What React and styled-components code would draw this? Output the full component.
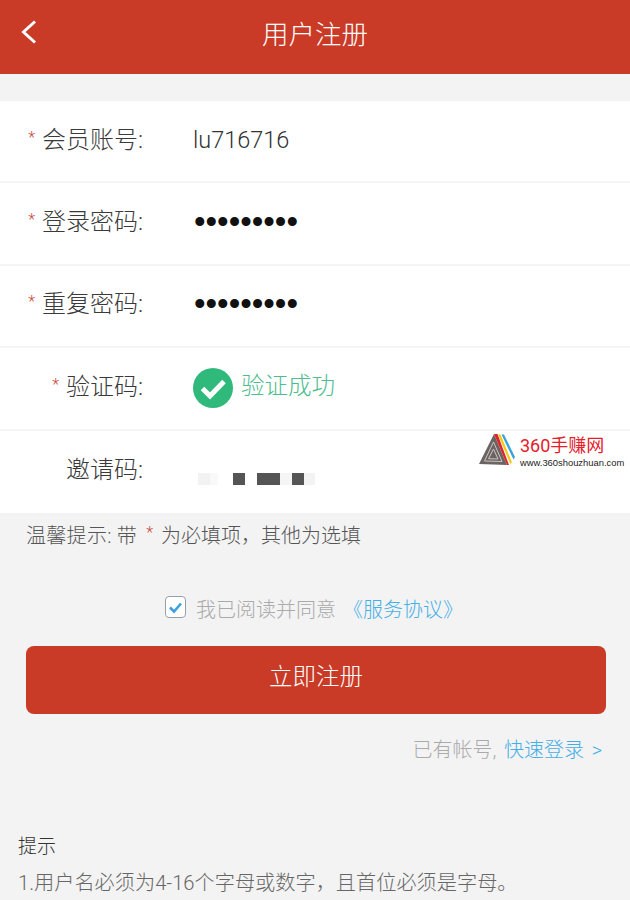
import React from 'react';
import styled, { createGlobalStyle } from 'styled-components';

const fontStack = 'Roboto, "Noto Sans CJK SC", "Liberation Sans", sans-serif';

const red = '#ca3b27';
const blue = '#45aee6';

const GlobalStyle = createGlobalStyle`
  html, body {
    margin: 0;
    height: 900px;
    overflow: hidden;
    background: #f3f3f3;
  }

  body {
    font-family: ${fontStack};
    font-weight: 300;
  }
`;

const Page = styled.div`
  width: 630px;
  height: 900px;
  position: relative;
  overflow: hidden;
  background: #f3f3f3;
  color: #333;
`;

const Header = styled.header`
  height: 74px;
  display: flex;
  align-items: center;
  justify-content: center;
  position: relative;
  background: ${red};
  color: #fff;
`;

const BackButton = styled.a`
  position: absolute;
  left: 20px;
  top: 19px;
  display: block;
  width: 18px;
  height: 26px;
`;

const Title = styled.h1`
  margin: 0 0 4px;
  font-size: 26.5px;
  font-weight: 300;
  line-height: 36px;
`;

const Form = styled.section`
  margin-top: 27px;
  background: #fff;
`;

const Row = styled.div`
  height: 82.4px;
  box-sizing: border-box;
  display: grid;
  grid-template-columns: 143px 1fr;
  column-gap: 50px;
  align-items: center;
  border-bottom: ${(p) => (p.$last ? 'none' : '2px solid #f5f5f5')};
`;

const Label = styled.label`
  margin-bottom: 3px;
  font-size: 24px;
  line-height: 32px;
  text-align: right;
  color: #3a3a3a;
  white-space: nowrap;
`;

const Star = styled.span`
  color: #c9493a;
  font-size: 16px;
  line-height: 0;
  margin: 0 ${(p) => p.$gap ?? 7}px 0 ${(p) => p.$lead ?? 0}px;
  vertical-align: 5px;
`;

const Value = styled.span`
  margin-bottom: 3px;
  font-size: 23.5px;
  line-height: 32px;
  color: #333;
`;

const Dots = styled.span`
  margin: 0 0 4px 1px;
  font-family: "Liberation Sans", sans-serif;
  font-weight: 400;
  font-size: 33px;
  line-height: 32px;
  color: #111;
`;

const Verified = styled.div`
  display: flex;
  align-items: center;
  gap: 8px;
  color: #4dbd8e;
  font-size: 23.5px;
  line-height: 40px;
`;

const VerifiedText = styled.span`
  margin-bottom: 4px;
`;

const Mosaic = styled.div`
  display: flex;
  margin: 14px 0 0 5px;
  height: 12px;
`;

const Cell = styled.i`
  display: block;
  width: ${(p) => p.$w}px;
  height: 12px;
  background: ${(p) => p.$c};
`;

const Watermark = styled.div`
  position: absolute;
  left: 479px;
  top: 433px;
  width: 146px;
  height: 36px;
  display: flex;
  gap: 5px;
`;

const WatermarkText = styled.div`
  display: flex;
  flex-direction: column;
`;

const WatermarkName = styled.span`
  color: #e5202a;
  font-size: 18px;
  font-weight: 400;
  line-height: 20px;
  margin-top: 3px;
  white-space: nowrap;
`;

const WatermarkUrl = styled.span`
  color: #222;
  font-family: "Liberation Sans", sans-serif;
  font-size: 9.4px;
  font-weight: 400;
  line-height: 11px;
  margin-top: 1px;
  white-space: nowrap;
`;

const Hint = styled.p`
  margin: 10px 0 0 26px;
  font-size: 20px;
  line-height: 27px;
  color: #555;
  white-space: nowrap;
`;

const HintLead = styled.span`
  margin-right: 1px;
  letter-spacing: 0.3px;
`;

const Agree = styled.div`
  margin: 45px 0 0 165px;
  height: 28px;
  display: flex;
  align-items: center;
  font-size: 20px;
  color: #aaa;
`;

const Checkbox = styled.span`
  box-sizing: border-box;
  width: 21px;
  height: 22px;
  margin: -3px 10px 0 0;
  border: 1.5px solid #9a9fa6;
  border-radius: 4px;
  background: #fff;
  display: flex;
  align-items: center;
  justify-content: center;
`;

const BlueLink = styled.a`
  color: ${blue};
  margin-left: ${(p) => p.$gap || 0}px;
`;

const SubmitButton = styled.button`
  display: block;
  width: 580px;
  height: 68px;
  margin: 23px 0 0 26px;
  padding: 0 0 6px;
  border: 0;
  border-radius: 8px;
  background: ${red};
  color: #fff;
  font: 300 23.5px/34px ${fontStack};
`;

const LoginLine = styled.div`
  margin: 22px 28px 0 0;
  text-align: right;
  font-size: 20px;
  line-height: 28px;
  word-spacing: 2.8px;
  color: #aaa;
`;

const Notes = styled.div`
  margin: 70px 0 0 18px;
`;

const NotesTitle = styled.div`
  font-size: 19px;
  line-height: 26px;
  color: #333;
`;

const NotesLine = styled.div`
  margin-top: 10px;
  font-size: 20.2px;
  line-height: 27px;
  color: #666;
  white-space: nowrap;
`;

const mosaicCells = [
  [12, '#f2f2f2'], [8, '#f9f9f9'], [15, '#fff'], [12, '#555'], [12, '#fff'],
  [23, '#555'], [12, '#f5f5f5'], [12, '#555'], [11, '#f3f3f3']
];

const BackIcon = () => (
  <svg width="18" height="26" viewBox="0 0 18 26" fill="none">
    <path d="M15 2.500 3.500 13 15 23.500" stroke="#fff" strokeWidth="3" />
  </svg>
);

const SuccessIcon = () => (
  <svg width="40" height="40" viewBox="0 0 40 40">
    <circle cx="20" cy="20" r="20" fill="#2fb97b" />
    <path d="M9.500 20.500 17 28 31 13.500" fill="none" stroke="#fff" strokeWidth="5" />
  </svg>
);

const CheckIcon = () => (
  <svg width="15" height="13" viewBox="0 0 15 13">
    <path d="M2 6.500 6 10.500 13 2.500" fill="none" stroke="#3f9fe0" strokeWidth="2.600" />
  </svg>
);

const LogoIcon = () => (
  <svg width="36" height="34" viewBox="0 0 36 34">
    <path d="M15 1 28 32 0 31Z" fill="#6c6462" />
    <path d="M14.500 9 23 28.500 5.500 28Z" fill="none" stroke="#c9c6c4" strokeWidth="1" />
    <path d="M14.500 16 19 26 9.500 25.700Z" fill="none" stroke="#c9c6c4" strokeWidth="1" />
    <path d="M15 1h3.500L30 32h-2Z" fill="#d9252b" />
    <path d="M19 1.500h2.500L33 29.500l-1.700 1.500Z" fill="#f6c917" />
    <path d="M22.500 1.500h2.500L36 24l-1.500 2.500Z" fill="#3aa3db" />
  </svg>
);

const App = () => (
  <Page>
    <GlobalStyle />
    <Header>
      <BackButton><BackIcon /></BackButton>
      <Title>用户注册</Title>
    </Header>

    <Form>
      <Row>
        <Label><Star>*</Star>会员账号:</Label>
        <Value>lu716716</Value>
      </Row>
      <Row>
        <Label><Star>*</Star>登录密码:</Label>
        <Dots>•••••••••</Dots>
      </Row>
      <Row>
        <Label><Star>*</Star>重复密码:</Label>
        <Dots>•••••••••</Dots>
      </Row>
      <Row>
        <Label><Star>*</Star>验证码:</Label>
        <Verified>
          <SuccessIcon />
          <VerifiedText>验证成功</VerifiedText>
        </Verified>
      </Row>
      <Row $last>
        <Label>邀请码:</Label>
        <Mosaic>
          {mosaicCells.map(([w, c], i) => <Cell key={i} $w={w} $c={c} />)}
        </Mosaic>
      </Row>
    </Form>

    <Watermark>
      <LogoIcon />
      <WatermarkText>
        <WatermarkName>360手赚网</WatermarkName>
        <WatermarkUrl>www.360shouzhuan.com</WatermarkUrl>
      </WatermarkText>
    </Watermark>

    <Hint>
      <HintLead>温馨提示: 带</HintLead>
      <Star $lead={8} $gap={8}>*</Star>为必填项，其他为选填
    </Hint>

    <Agree>
      <Checkbox><CheckIcon /></Checkbox>
      我已阅读并同意
      <BlueLink $gap={7}>《服务协议》</BlueLink>
    </Agree>

    <SubmitButton>立即注册</SubmitButton>

    <LoginLine>已有帐号, <BlueLink>快速登录 &gt;</BlueLink></LoginLine>

    <Notes>
      <NotesTitle>提示</NotesTitle>
      <NotesLine>1.用户名必须为4-16个字母或数字，且首位必须是字母。</NotesLine>
    </Notes>
  </Page>
);

export default App;
